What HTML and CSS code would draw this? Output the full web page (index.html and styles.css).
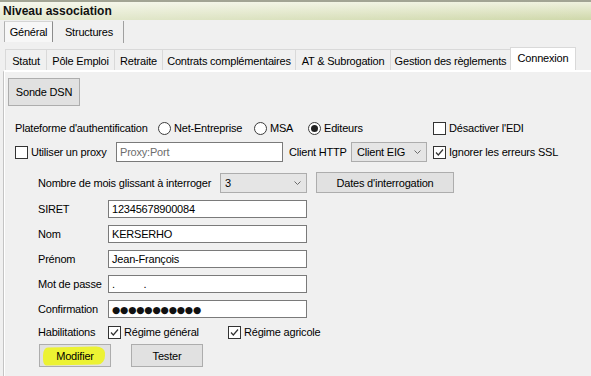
FILE: index.html
```html
<!DOCTYPE html>
<html lang="fr">
<head>
    <meta charset="UTF-8">
    <meta name="viewport" content="width=device-width, initial-scale=1.0">
    <title>Niveau association</title>
    <link rel="stylesheet" href="styles.css">
</head>
<body>
    <div class="title-bar">Niveau association</div>

    <div class="main-tabs">
        <div class="main-tab active">Général</div>
        <div class="main-tab">Structures</div>
    </div>

    <div class="sub-tabs">
        <div class="sub-tab tab-statut">Statut</div>
        <div class="sub-tab tab-pole">Pôle Emploi</div>
        <div class="sub-tab tab-retraite">Retraite</div>
        <div class="sub-tab tab-contrats">Contrats complémentaires</div>
        <div class="sub-tab tab-at">AT &amp; Subrogation</div>
        <div class="sub-tab tab-gestion">Gestion des règlements</div>
        <div class="sub-tab tab-connexion active">Connexion</div>
    </div>

    <div class="page">
        <div class="row row-dsn">
            <button class="btn btn-dsn">Sonde DSN</button>
        </div>

        <div class="row row-auth">
            <span class="lbl lbl-auth">Plateforme d'authentification</span>
            <label class="opt opt-net"><span class="radio"></span>Net-Entreprise</label>
            <label class="opt opt-msa"><span class="radio"></span>MSA</label>
            <label class="opt opt-editeurs"><span class="radio checked"></span>Editeurs</label>
            <label class="opt"><span class="check"></span>Désactiver l'EDI</label>
        </div>

        <div class="row row-proxy">
            <label class="opt opt-proxy"><span class="check"></span>Utiliser un proxy</label>
            <div class="field field-proxy placeholder">Proxy:Port</div>
            <span class="lbl lbl-http">Client HTTP</span>
            <div class="combo combo-http">Client EIG<svg class="chevron" width="7" height="4" viewBox="0 0 7 4"><polyline points="0.5,0.5 3.5,3.5 6.5,0.5" fill="none" stroke="#6a6a6a" stroke-width="1"/></svg></div>
            <label class="opt"><span class="check checked"><svg width="11" height="11" viewBox="0 0 11 11"><polyline points="2,5.5 4.3,8 9,2.5" fill="none" stroke="#333" stroke-width="1.2"/></svg></span>Ignorer les erreurs SSL</label>
        </div>

        <div class="group">
            <div class="row row-mois">
                <span class="lbl lbl-mois">Nombre de mois glissant à interroger</span>
                <div class="combo combo-mois">3<svg class="chevron" width="7" height="4" viewBox="0 0 7 4"><polyline points="0.5,0.5 3.5,3.5 6.5,0.5" fill="none" stroke="#6a6a6a" stroke-width="1"/></svg></div>
                <button class="btn btn-dates">Dates d'interrogation</button>
            </div>

            <div class="row row-field">
                <span class="lbl lbl-field">SIRET</span>
                <div class="field field-wide">12345678900084</div>
            </div>
            <div class="row row-field">
                <span class="lbl lbl-field">Nom</span>
                <div class="field field-wide">KERSERHO</div>
            </div>
            <div class="row row-field">
                <span class="lbl lbl-field">Prénom</span>
                <div class="field field-wide">Jean-François</div>
            </div>
            <div class="row row-field">
                <span class="lbl lbl-field">Mot de passe</span>
                <div class="field field-wide pre">.          .</div>
            </div>
            <div class="row row-field">
                <span class="lbl lbl-field">Confirmation</span>
                <div class="field field-wide"><span class="dots">●●●●●●●●●●●</span></div>
            </div>

            <div class="row row-habil">
                <span class="lbl lbl-field">Habilitations</span>
                <label class="opt opt-regime"><span class="check checked"><svg width="11" height="11" viewBox="0 0 11 11"><polyline points="2,5.5 4.3,8 9,2.5" fill="none" stroke="#333" stroke-width="1.2"/></svg></span>Régime général</label>
                <label class="opt"><span class="check checked"><svg width="11" height="11" viewBox="0 0 11 11"><polyline points="2,5.5 4.3,8 9,2.5" fill="none" stroke="#333" stroke-width="1.2"/></svg></span>Régime agricole</label>
            </div>

            <div class="row row-buttons">
                <button class="btn btn-action highlighted"><span>Modifier</span></button>
                <button class="btn btn-action">Tester</button>
            </div>
        </div>
    </div>
</body>
</html>
```

FILE: styles.css
```css
* {
    box-sizing: border-box;
}
body {
    margin: 0;
    width: 591px;
    height: 376px;
    overflow: hidden;
    background-color: #f0f0f0;
    font-family: "Liberation Sans", Arial, sans-serif;
    font-size: 11px;
    letter-spacing: -0.2px;
    color: #000;
}

/* Bandeau du haut */
.title-bar {
    height: 20px;
    border-top: 2px solid #a2a494;
    padding-left: 3px;
    font-size: 12px;
    font-weight: bold;
    letter-spacing: 0;
    line-height: 18px;
    color: #111;
    background: linear-gradient(to right, rgba(255, 255, 255, 0.45), rgba(255, 255, 255, 0)),
                linear-gradient(#eff1de, #cfd8aa);
}

/* Onglets principaux */
.main-tabs {
    display: flex;
    height: 22px;
    margin-top: 1px;
    padding-left: 4px;
}
.main-tab {
    display: flex;
    align-items: center;
    justify-content: center;
    height: 21px;
    border-right: 1px solid #a0a0a0;
}
.main-tab.active {
    width: 49px;
    background-color: #f7f7f7;
    border-top: 1px solid #d4d4d4;
    border-left: 1px solid #b0b0b0;
    border-right: 1px solid #8c8c8c;
}
.main-tab:nth-child(2) {
    width: 71px;
    padding-left: 2px;
    height: 22px;
}

/* Onglets secondaires */
.sub-tabs {
    display: flex;
    align-items: flex-end;
    height: 23px;
    margin-top: 4px;
    padding-left: 5px;
}
.sub-tab {
    display: flex;
    align-items: center;
    justify-content: center;
    height: 21px;
    padding-top: 1px;
    border: 1px solid #d9d9d9;
    border-right: none;
    border-bottom: none;
    background-color: #f0f0f0;
}
.sub-tab.active {
    height: 23px;
    padding-top: 0;
    padding-bottom: 2px;
    border-right: 1px solid #d9d9d9;
    background-color: #fff;
}
.tab-statut { width: 41px; }
.tab-pole { width: 68px; }
.tab-retraite { width: 48px; }
.tab-contrats { width: 133px; }
.tab-at { width: 95px; }
.tab-gestion { width: 120px; }
.tab-connexion { width: 66px; }

/* Contenu de l'onglet */
.page {
    margin-left: 3px;
    height: 306px;
    border-top: 2px solid #fff;
    border-left: 1px solid #c4c4c4;
    box-shadow: inset 1px 0 0 #fff;
    padding-top: 6px;
}
.row {
    display: flex;
    align-items: center;
}
.lbl {
    white-space: nowrap;
}
.btn {
    font-family: inherit;
    font-size: 11px;
    letter-spacing: -0.2px;
    color: #000;
    background-color: #e1e1e1;
    border: 1px solid #adadad;
    padding: 0;
    margin: 0;
}

.row-dsn {
    padding-left: 4px;
}
.btn-dsn {
    width: 72px;
    height: 28px;
}

.row-auth {
    height: 16px;
    margin-top: 14px;
    padding-left: 11px;
}
.lbl-auth { width: 143px; }
.opt {
    display: flex;
    align-items: center;
    gap: 3px;
    white-space: nowrap;
}
.opt-net { width: 96px; }
.opt-msa { width: 54px; }
.opt-editeurs { width: 125px; }
.opt-proxy { width: 101px; }
.opt-regime { width: 120px; }

.radio {
    width: 13px;
    height: 13px;
    border: 1px solid #3c3c3c;
    border-radius: 50%;
    background-color: #fff;
    display: flex;
    align-items: center;
    justify-content: center;
}
.radio.checked::after {
    content: "";
    width: 7px;
    height: 7px;
    border-radius: 50%;
    background-color: #222;
}
.check {
    width: 13px;
    height: 13px;
    border: 1px solid #333;
    background-color: #fff;
    display: flex;
    align-items: center;
    justify-content: center;
}

.row-proxy {
    height: 20px;
    margin-top: 6px;
    padding-left: 11px;
}
.field {
    height: 20px;
    border: 1px solid #7a7a7a;
    background-color: #fff;
    padding-left: 3px;
    display: flex;
    align-items: center;
    white-space: nowrap;
}
.field-proxy { width: 167px; }
.placeholder { color: #6d6d6d; }
.pre { white-space: pre; }
.lbl-http {
    width: 62px;
    margin-left: 6px;
}
.combo {
    display: flex;
    align-items: center;
    justify-content: space-between;
    height: 20px;
    padding: 0 5px 0 4px;
    background-color: #e5e5e5;
    border: 1px solid #adadad;
}
.combo-http {
    width: 76px;
    margin-right: 6px;
    padding-left: 5px;
}
.chevron {
    flex-shrink: 0;
}

/* Bloc des identifiants */
.group {
    padding-left: 34px;
}
.row-mois {
    height: 21px;
    margin-top: 10px;
}
.lbl-mois { width: 182px; }
.combo-mois { width: 87px; }
.btn-dates {
    width: 138px;
    height: 21px;
    margin-left: 9px;
}

.row-field {
    height: 18px;
    margin-top: 7px;
}
.lbl-field { width: 70px; }
.field-wide {
    width: 199px;
    height: 18px;
}
.dots {
    font-family: "DejaVu Sans", sans-serif;
    font-size: 9.5px;
    letter-spacing: -0.2px;
    color: #111;
}

.row-habil {
    height: 14px;
    margin-top: 7px;
}

.row-buttons {
    margin-top: 5px;
    padding-left: 1px;
    gap: 20px;
}
.btn-action {
    width: 72px;
    height: 23px;
}

/* Surlignage jaune sur le bouton Modifier */
.highlighted {
    position: relative;
}
.highlighted::before {
    content: "";
    position: absolute;
    left: 3px;
    right: 5px;
    top: 2px;
    bottom: 1px;
    background-color: #ecf233;
    border-radius: 5px 9px 7px 3px / 8px 6px 9px 6px;
    transform: rotate(-1deg);
}
.highlighted span {
    position: relative;
}
```
